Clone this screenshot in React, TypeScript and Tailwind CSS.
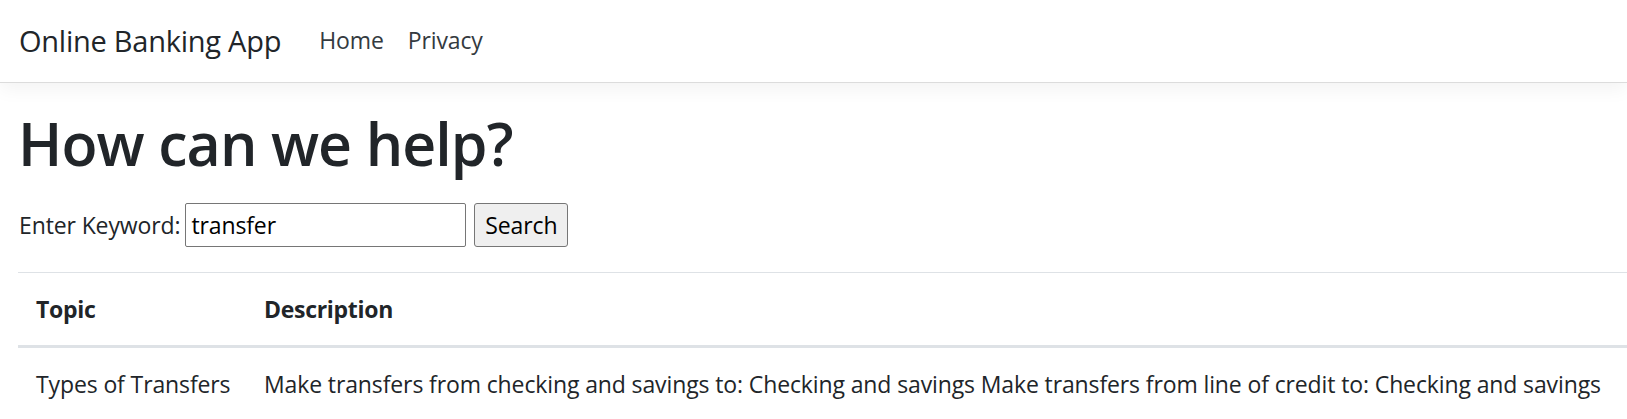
import { useState } from 'react';

const topics = [
  {
    topic: 'Types of Transfers',
    description:
      'Make transfers from checking and savings to: Checking and savings Make transfers from line of credit to: Checking and savings',
  },
];

export default function App() {
  const [keyword, setKeyword] = useState('transfer');

  return (
    <div className="min-h-screen overflow-hidden bg-white text-[#212529] font-['Open_Sans','Liberation_Sans',sans-serif]">
      {/* Navbar */}
      <header className="mb-[24px]">
        <nav className="flex h-[83px] items-center border-b border-[#dcdcdc] bg-white px-[19px] pb-[2px] shadow-[0_6px_18px_rgba(0,0,0,0.05)]">
          <a href="#" className="mr-[26px] text-[29px] leading-[45px] tracking-[-0.25px] text-[#212529]">
            Online Banking App
          </a>
          <ul className="flex text-[23px] leading-[36px] tracking-[-0.12px] text-[#343a40]">
            <li>
              <a href="#" className="px-[12px]">Home</a>
            </li>
            <li>
              <a href="#" className="px-[12px]">Privacy</a>
            </li>
          </ul>
        </nav>
      </header>

      <main className="px-[18px]">
        <h1 className="text-[59px] font-semibold leading-[72px] tracking-[-0.9px]">How can we help?</h1>

        <form
          className="mt-[24px] flex items-center text-[23px] leading-[36px] tracking-[-0.12px]"
          onSubmit={(e) => e.preventDefault()}
        >
          <label htmlFor="keyword" className="mr-[5px] pl-[1px]">Enter Keyword:</label>
          <input
            id="keyword"
            type="text"
            value={keyword}
            onChange={(e) => setKeyword(e.target.value)}
            className="h-[44px] w-[281px] rounded-[2px] border-[1.5px] border-[#767676] px-[5px] text-[23px] tracking-[-0.12px] text-black outline-none"
          />
          <button
            type="submit"
            className="ml-[8px] h-[44px] w-[94px] rounded-[3px] border-[1.5px] border-[#767676] bg-[#efefef] text-[23px] tracking-[-0.12px] text-black"
          >
            Search
          </button>
        </form>

        <table className="mt-[25px] w-[1640px] table-fixed border-t-[1.5px] border-[#dee2e6] text-left text-[23px] leading-[36px] tracking-[-0.12px]">
          <colgroup>
            <col className="w-[228px]" />
            <col />
          </colgroup>
          <thead>
            <tr className="border-b-[3px] border-[#dee2e6]">
              <th className="px-[18px] py-[18px] font-bold tracking-[-0.3px]">Topic</th>
              <th className="px-[18px] py-[18px] font-bold tracking-[-0.3px]">Description</th>
            </tr>
          </thead>
          <tbody>
            {topics.map((t) => (
              <tr key={t.topic} className="border-b-[1.5px] border-[#dee2e6]">
                <td className="whitespace-nowrap px-[18px] py-[18px]">{t.topic}</td>
                <td className="whitespace-nowrap px-[18px] py-[18px]">{t.description}</td>
              </tr>
            ))}
          </tbody>
        </table>
      </main>
    </div>
  );
}
